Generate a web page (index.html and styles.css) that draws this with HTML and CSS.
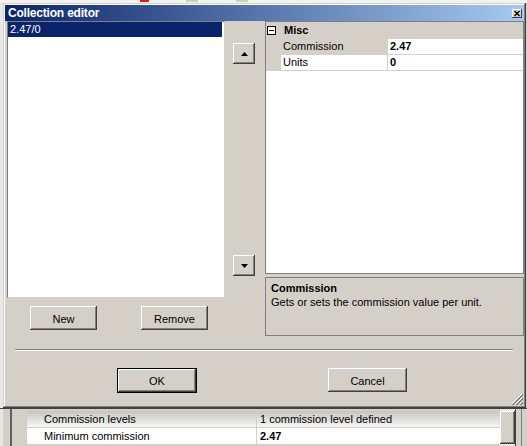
FILE: index.html
```html
<!DOCTYPE html>
<html lang="en">
<head>
    <meta charset="UTF-8">
    <title>Collection editor</title>
    <link rel="stylesheet" href="styles.css">
</head>
<body>
    <div class="backtop">
        <span class="mark mark-red"></span>
        <span class="mark mark-green"></span>
        <span class="mark mark-green2"></span>
    </div>

    <div class="desk">
        <div class="edge"></div>
        <div class="dialog">
            <div class="caption">
                <span class="caption-text">Collection editor</span>
                <span class="close-btn">
                    <svg width="10" height="9" viewBox="0 0 10 9">
                        <path d="M2.5 2 L7.5 7 M7.5 2 L2.5 7" stroke="#000" stroke-width="1.3"/>
                    </svg>
                </span>
            </div>

            <div class="content">
                <div class="members">
                    <div class="listbox">
                        <div class="item selected">2.47/0</div>
                    </div>
                    <div class="member-buttons">
                        <button class="btn btn-small">New</button>
                        <button class="btn btn-small">Remove</button>
                    </div>
                </div>

                <div class="order">
                    <button class="arrow-btn">
                        <svg width="7" height="4" viewBox="0 0 7 4"><polygon points="3.5,0 7,4 0,4" fill="#000"/></svg>
                    </button>
                    <button class="arrow-btn">
                        <svg width="7" height="4" viewBox="0 0 7 4"><polygon points="0,0 7,0 3.5,4" fill="#000"/></svg>
                    </button>
                </div>

                <div class="props">
                    <div class="grid">
                        <div class="cat-row">
                            <svg class="toggle" width="9" height="9" viewBox="0 0 9 9">
                                <rect x="0.5" y="0.5" width="8" height="8" fill="#fff" stroke="#000"/>
                                <path d="M2 4.5 H7" stroke="#000"/>
                            </svg>
                            <span class="cat-name">Misc</span>
                        </div>
                        <div class="prop-row active">
                            <span class="prop-name">Commission</span>
                            <span class="prop-value">2.47</span>
                        </div>
                        <div class="prop-row">
                            <span class="prop-name">Units</span>
                            <span class="prop-value">0</span>
                        </div>
                    </div>
                    <div class="help">
                        <div class="help-title">Commission</div>
                        <div class="help-text">Gets or sets the commission value per unit.</div>
                    </div>
                </div>
            </div>

            <div class="separator"></div>

            <div class="actions">
                <button class="btn btn-wide btn-default">OK</button>
                <button class="btn btn-wide btn-cancel">Cancel</button>
            </div>

            <svg class="grip" width="12" height="12" viewBox="0 0 12 12">
                <path d="M11 1 L1 11 M11 5 L5 11 M11 9 L9 11" stroke="#fff" stroke-width="1"/>
                <path d="M12 1 L1 12 M12 2 L2 12 M12 5 L5 12 M12 6 L6 12 M12 9 L9 12 M12 10 L10 12" stroke="#808080" stroke-width="1"/>
            </svg>
        </div>
    </div>

    <!-- the settings window underneath the dialog -->
    <div class="under">
        <div class="under-edge"></div>
        <div class="under-pane"></div>
        <div class="under-rows">
            <div class="under-row shaded">
                <span class="u-name">Commission levels</span>
                <span class="u-value">1 commission level defined</span>
            </div>
            <div class="under-row">
                <span class="u-name">Minimum commission</span>
                <span class="u-value bold">2.47</span>
            </div>
        </div>
        <div class="under-scroll">
            <div class="thumb"></div>
        </div>
        <div class="under-frame"></div>
    </div>
</body>
</html>
```

FILE: styles.css
```css
body {
    margin: 0;
    width: 527px;
    height: 446px;
    overflow: hidden;
    font-family: "Liberation Sans", Arial, sans-serif;
    font-size: 11px;
    color: #000;
    background-color: #d4d0c8;
}
button {
    font-family: inherit;
    font-size: 11px;
    color: #000;
    padding: 0;
    margin: 0;
    border: none;
    background-color: #d4d0c8;
}

/* strip of the main window above the dialog */
.backtop {
    height: 3px;
    background-color: #f2f2f2;
    position: relative;
}
.mark {
    position: absolute;
    top: 0;
    height: 2px;
}
.mark-red { left: 140px; width: 9px; background-color: #d02020; }
.mark-green { left: 186px; width: 12px; background-color: #b8dcb0; }
.mark-green2 { left: 236px; width: 12px; background-color: #b8dcb0; }

.desk {
    display: flex;
    height: 405px;
}
.edge {
    width: 3px;
    background-color: #e8e8e8;
}

.dialog {
    position: relative;
    width: 523px;
    height: 405px;
    box-sizing: border-box;
    padding: 2px;
    background-color: #d4d0c8;
    box-shadow: inset -1px -1px #404040, inset 1px 1px #d4d0c8, inset -2px -2px #808080, inset 2px 2px #fff;
}

.caption {
    height: 16px;
    display: flex;
    align-items: center;
    justify-content: space-between;
    padding: 0 2px 0 3px;
    background: linear-gradient(to right, #0a246a, #a6caf0);
}
.caption-text {
    color: #fff;
    font-weight: bold;
    font-size: 12px;
    letter-spacing: -0.2px;
}
.close-btn {
    display: block;
    width: 10px;
    height: 9px;
    margin-top: 1px;
    background-color: #d4d0c8;
    box-shadow: inset -1px -1px #404040, inset 1px 1px #fff;
}
.close-btn svg {
    display: block;
}

.content {
    display: flex;
    padding-left: 2px;
}

/* member list */
.members {
    width: 218px;
}
.listbox {
    height: 277px;
    box-sizing: border-box;
    background-color: #fff;
    border: 1px solid #808080;
    border-right-color: #d4d0c8;
    border-bottom-color: #d4d0c8;
    padding: 0 2px 0 0;
}
.item {
    height: 15px;
    line-height: 15px;
    padding-left: 2px;
}
.item.selected {
    background-color: #0a246a;
    color: #fff;
}
.member-buttons {
    display: flex;
    gap: 44px;
    margin-top: 8px;
    padding-left: 23px;
}

.btn {
    height: 24px;
    padding-top: 1px;
    box-shadow: inset -1px -1px #404040, inset 1px 1px #fff, inset -2px -2px #808080, inset 2px 2px #d4d0c8;
}
.btn-small {
    width: 67px;
}
.btn-wide {
    width: 79px;
}
.btn-default {
    width: 80px;
    height: 25px;
    border: 1px solid #000;
}
.btn-cancel {
    margin-left: 131px;
}

/* up / down arrows */
.order {
    width: 40px;
    height: 255px;
    box-sizing: border-box;
    padding: 22px 0 0 8px;
    display: flex;
    flex-direction: column;
    justify-content: space-between;
}
.arrow-btn {
    width: 22px;
    height: 21px;
    display: flex;
    align-items: center;
    justify-content: center;
    box-shadow: inset -1px -1px #404040, inset 1px 1px #fff, inset -2px -2px #808080, inset 2px 2px #d4d0c8;
}
.arrow-btn svg {
    display: block;
}

/* property grid */
.props {
    width: 259px;
}
.grid {
    height: 253px;
    box-sizing: border-box;
    border: 1px solid #808080;
    background-color: #fff;
}
.cat-row {
    height: 16px;
    display: flex;
    align-items: center;
    background-color: #d4d0c8;
    border-bottom: 1px solid #d4d0c8;
}
.toggle {
    margin-left: 1px;
    display: block;
}
.cat-name {
    margin-left: 8px;
    font-weight: bold;
}
.prop-row {
    display: flex;
    height: 15px;
    line-height: 15px;
    border-bottom: 1px solid #d4d0c8;
    border-left: 15px solid #d4d0c8;
}
.prop-name {
    width: 104px;
    padding-left: 2px;
    border-right: 1px solid #d4d0c8;
}
.prop-row.active .prop-name {
    background-color: #d4d0c8;
}
.prop-value {
    padding-left: 2px;
    font-weight: bold;
}

.help {
    height: 59px;
    margin-top: 3px;
    box-sizing: border-box;
    border: 1px solid #808080;
    padding: 4px 0 0 5px;
}
.help-title {
    font-weight: bold;
    line-height: 13px;
}
.help-text {
    line-height: 14px;
}

.separator {
    margin: 13px 10px 0 10px;
    height: 0;
    border-top: 1px solid #808080;
    border-bottom: 1px solid #fff;
    width: 498px;
}

.actions {
    display: flex;
    align-items: flex-start;
    margin-top: 17px;
    padding-left: 112px;
}

.grip {
    position: absolute;
    right: 3px;
    bottom: 3px;
}

/* window below the dialog */
.under {
    display: flex;
    height: 38px;
    border-top: 1px solid #404040;
    background-color: #d4d0c8;
}
.under-edge {
    width: 3px;
    background-color: #e8e8e8;
}
.under-pane {
    width: 7px;
    border-right: 2px solid #606060;
}
.under-rows {
    width: 473px;
    margin-left: 15px;
    padding-top: 2px;
}
.under-row {
    display: flex;
    height: 16px;
    line-height: 16px;
    background-color: #fff;
    border-bottom: 1px solid #d4d0c8;
}
.under-row.shaded {
    background: linear-gradient(to bottom, #c8c5bd, #f6f6f6);
}
.u-name {
    width: 212px;
    padding-left: 17px;
    border-right: 1px solid #d4d0c8;
}
.u-value {
    padding-left: 3px;
}
.u-value.bold {
    font-weight: bold;
}
.under-scroll {
    width: 15px;
    padding-top: 2px;
    background-image: repeating-conic-gradient(#d4d0c8 0 25%, #fff 0 50%);
    background-size: 2px 2px;
}
.thumb {
    height: 33px;
    box-sizing: border-box;
    background-color: #d4d0c8;
    box-shadow: inset -1px -1px #404040, inset 1px 1px #fff, inset -2px -2px #808080;
}
.under-frame {
    width: 5px;
    border-left: 1px solid #404040;
    border-right: 1px solid #808080;
}
```
